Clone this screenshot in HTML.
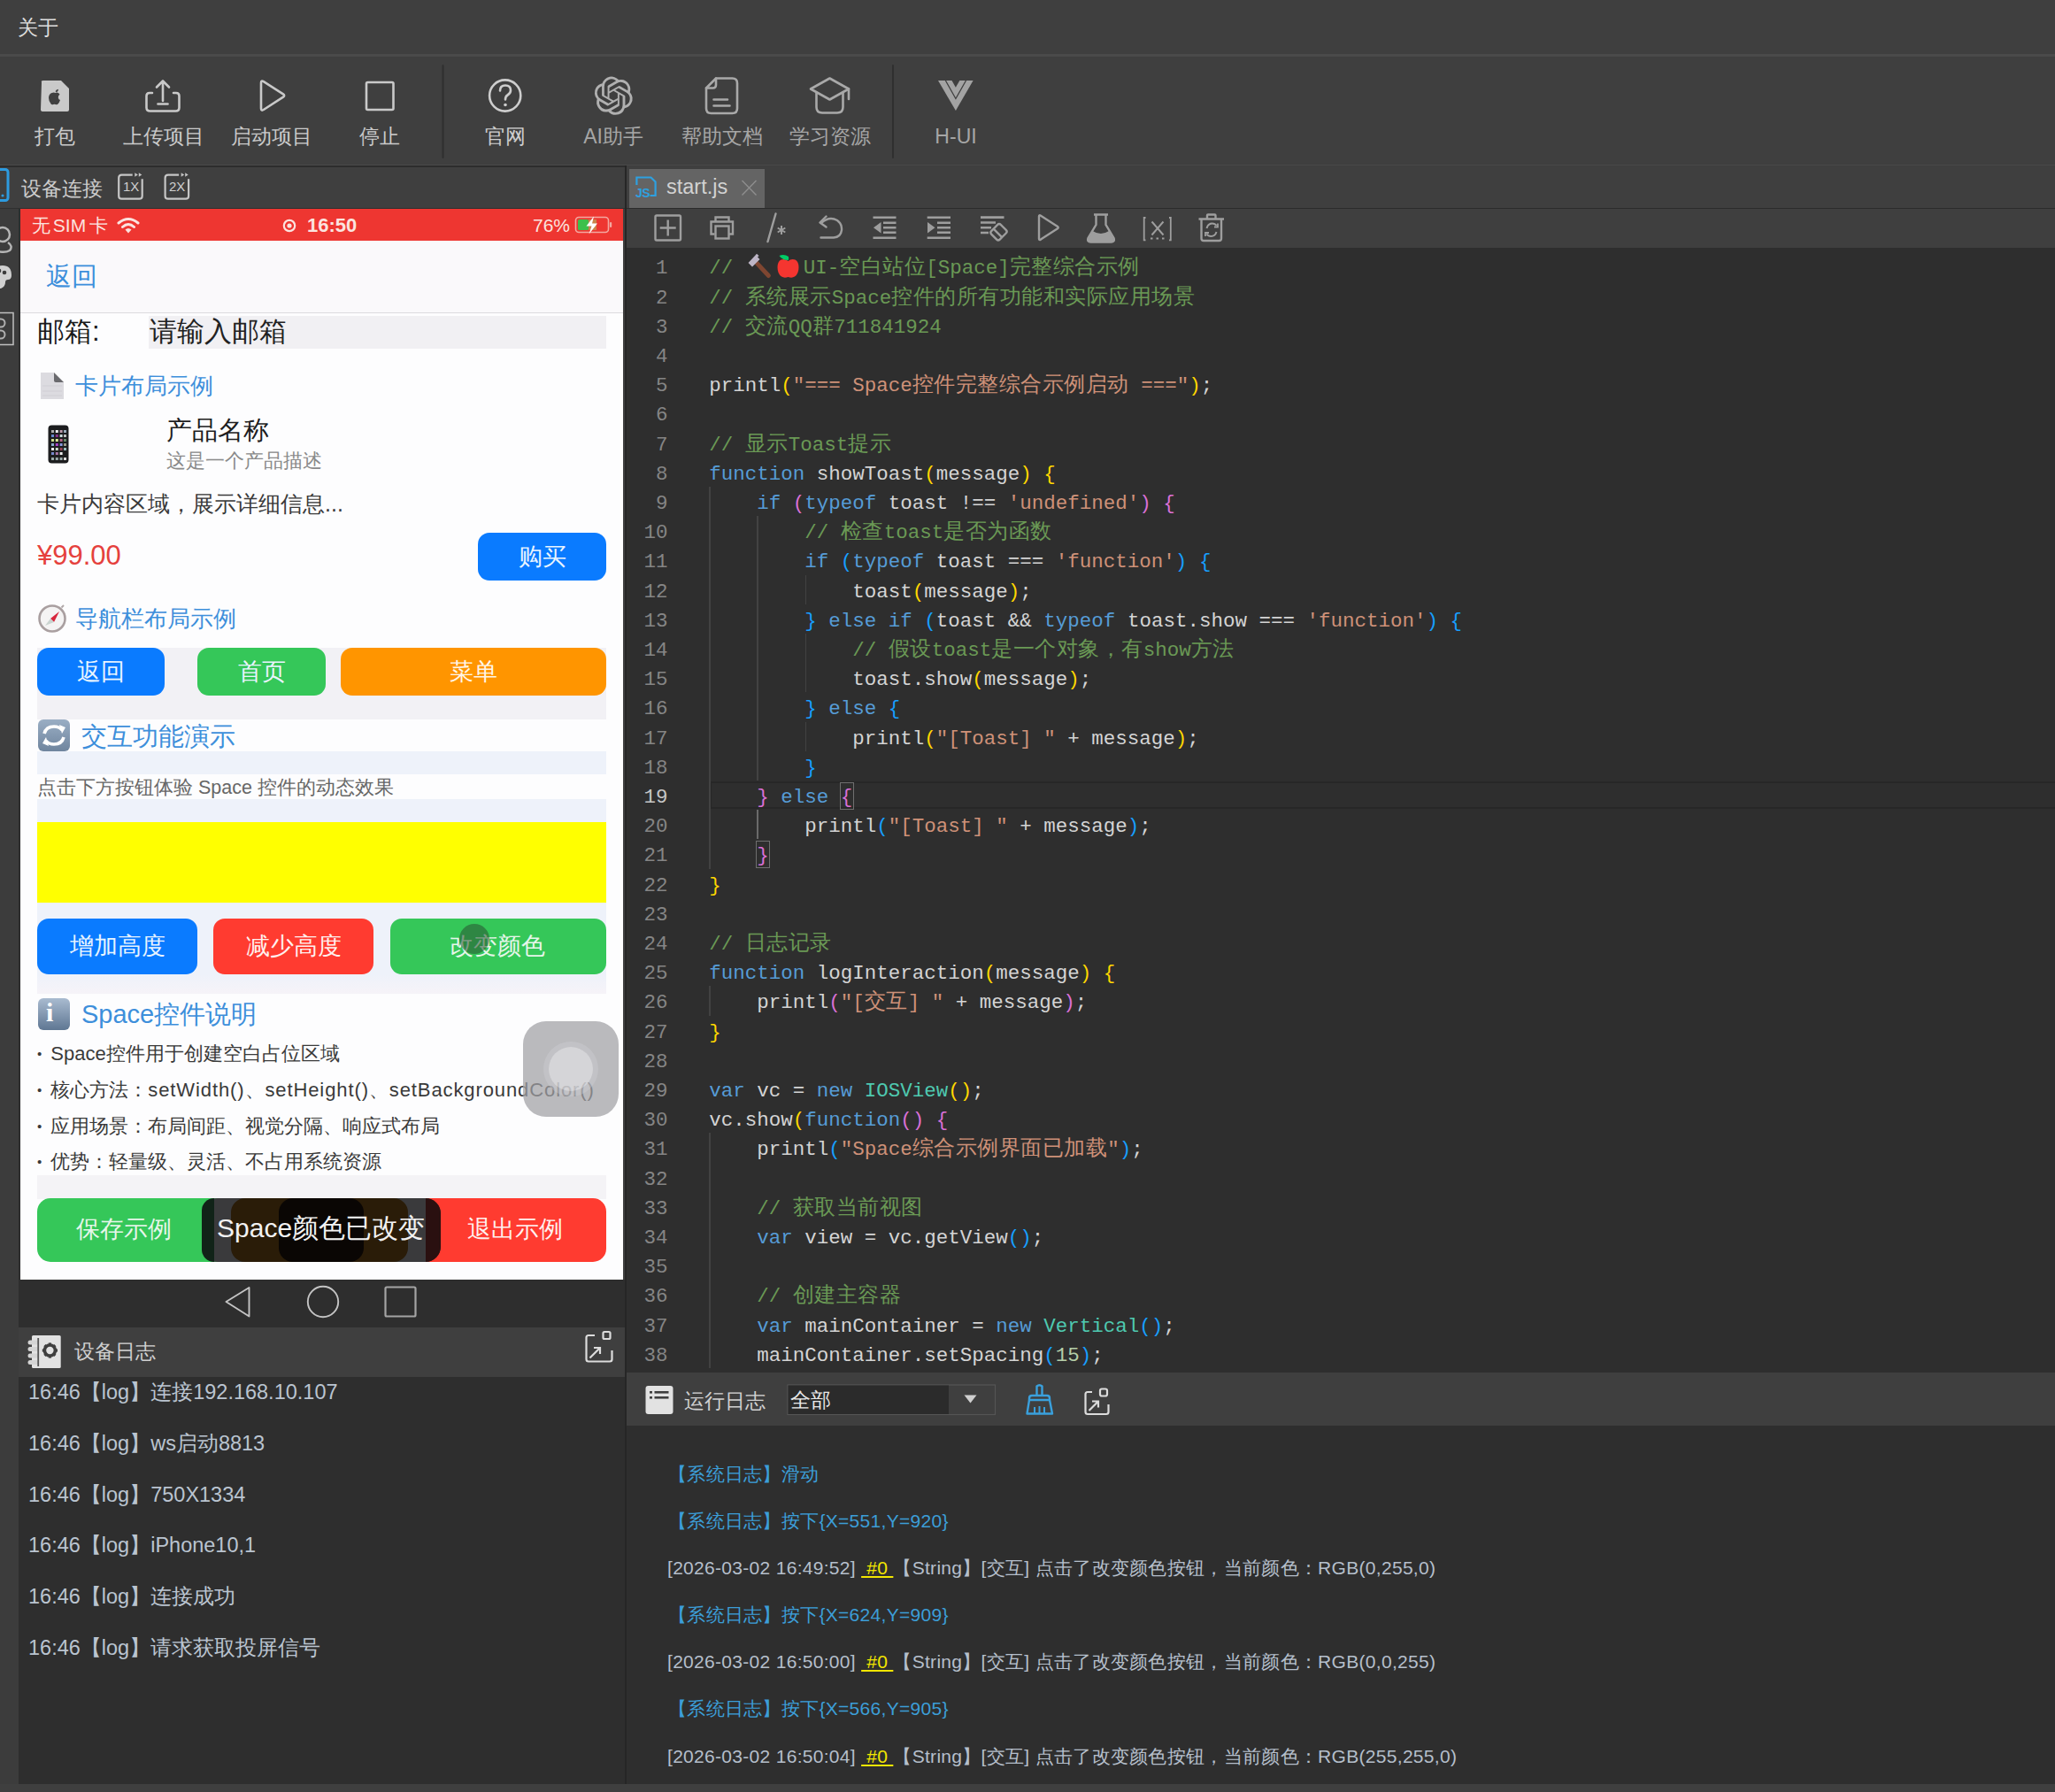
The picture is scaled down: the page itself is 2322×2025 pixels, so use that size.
<!DOCTYPE html>
<html><head><meta charset="utf-8">
<style>
*{margin:0;padding:0;box-sizing:border-box}
html,body{width:2322px;height:2025px;overflow:hidden;background:#3f3f3f;font-family:"Liberation Sans",sans-serif;}
.a{position:absolute}
.t{position:absolute;white-space:nowrap;line-height:1}
#menu{left:0;top:0;width:2322px;height:61px;background:#3f3f3f}
#tb{left:0;top:64px;width:2322px;height:122px;background:#3f3f3f}
.tbi{position:absolute;top:0;width:120px;height:122px;text-align:center;color:#cfcfcf;font-size:24px}
.tbi svg{position:absolute;left:42px;top:24px}
.tbi span{position:absolute;left:-20px;right:-20px;top:80px;text-align:center;line-height:24px}
.ln{position:absolute;left:0;width:46.5px;text-align:right;font-family:"Liberation Mono",monospace;font-size:22.5px;line-height:33.2px;height:33.2px;white-space:nowrap}
.cl{position:absolute;left:93.2px;font-family:"Liberation Mono",monospace;font-size:22.5px;line-height:33.2px;height:33.2px;white-space:pre}
.cj{font-family:"Liberation Sans",sans-serif;font-size:24px;letter-spacing:0.5px;line-height:0}
.emo{display:inline-block;position:relative;width:66px;height:0;vertical-align:top}
.rl{font-size:21px;line-height:24px;letter-spacing:0.3px}
.u{color:#f2e600;text-decoration:underline}
.code{font-family:"Liberation Mono",monospace;font-size:22.5px;}
</style></head><body>
<!-- menu -->
<div class="a" id="menu"></div>
<div class="a" style="left:0;top:61px;width:2322px;height:4px;background:#4a4a4a"></div>
<div class="t" style="left:19.5px;top:20px;font-size:23px;color:#dcdcdc">关于</div>
<!-- toolbar -->
<div class="a" id="tb"></div>
<div class="a" style="left:0;top:186px;width:2322px;height:1px;background:#494949"></div>


<!-- toolbar items -->
<svg class="a" style="left:0;top:64px" width="1120" height="122" viewBox="0 64 1120 122" fill="none" stroke-linecap="round" stroke-linejoin="round">
 <!-- pack -->
 <path d="M47 93 Q46 91 49 91 H69 L78 100 V124 Q78 126 76 126 H49 Q46 126 46 124 Z" fill="#c9c9c9"/>
 <path d="M62.5 103.2 Q63.5 101 66 100.8 Q66 103 64 104.2 Z M58.5 105 Q61 104 62.5 105 Q64 104 66 105 Q67 106 67.5 106.8 Q65.5 108 65.8 110.5 Q66.2 112.5 68 113 Q67 116 65.5 117.5 Q64.5 118.5 62.8 118 Q61.5 117.4 60.2 118 Q58.5 118.6 57.6 117.5 Q55 114.5 55 110.5 Q55.2 106 58.5 105 Z" fill="#3f3f3f"/>
 <!-- upload -->
 <g stroke="#c9c9c9" stroke-width="2.6">
  <path d="M172 105 H169 Q165.5 105 165.5 108.5 V121.5 Q165.5 125.5 169.5 125.5 H198.5 Q202.5 125.5 202.5 121.5 V108.5 Q202.5 105 199 105 H196"/>
  <path d="M184 114 V92 M177 98.5 L184 91.5 L191 98.5"/>
  <path d="M178.5 117.5 H189.5"/>
 </g>
 <!-- play -->
 <path d="M295 93.5 Q295 90.5 297.8 92.2 L320 106.3 Q322.3 108 320 109.7 L297.8 124 Q295 125.7 295 122.5 Z" stroke="#c9c9c9" stroke-width="2.6"/>
 <!-- stop -->
 <rect x="414" y="93" width="30.5" height="31" rx="1.5" stroke="#c9c9c9" stroke-width="2.6"/>
 <!-- separator -->
 <path d="M500.5 74 V178" stroke="#2f2f2f" stroke-width="2"/>
 <!-- question -->
 <g stroke="#cdcdcd" stroke-width="2.6">
  <circle cx="570.7" cy="108" r="17.6"/>
  <path d="M565 102.5 Q565 96.5 571 96.5 Q577 96.5 577 102 Q577 105.5 573.5 107.5 Q571 109 571 112.5"/>
 </g>
 <circle cx="571" cy="118.5" r="1.8" fill="#cdcdcd"/>
 <!-- openai -->
 <path transform="translate(671.6 86.6) scale(1.8)" fill="#b0b0b0" stroke="none" d="M22.2819 9.8211a5.9847 5.9847 0 0 0-.5157-4.9108 6.0462 6.0462 0 0 0-6.5098-2.9A6.0651 6.0651 0 0 0 4.9807 4.1818a5.9847 5.9847 0 0 0-3.9977 2.9 6.0462 6.0462 0 0 0 .7427 7.0966 5.98 5.98 0 0 0 .511 4.9107 6.051 6.051 0 0 0 6.5146 2.9001A5.9847 5.9847 0 0 0 13.2599 24a6.0557 6.0557 0 0 0 5.7718-4.2058 5.9894 5.9894 0 0 0 3.9977-2.9001 6.0557 6.0557 0 0 0-.7475-7.0729zm-9.022 12.6081a4.4755 4.4755 0 0 1-2.8764-1.0408l.1419-.0804 4.7783-2.7582a.7948.7948 0 0 0 .3927-.6813v-6.7369l2.02 1.1686a.071.071 0 0 1 .038.052v5.5826a4.504 4.504 0 0 1-4.4945 4.4944zm-9.6607-4.1254a4.4708 4.4708 0 0 1-.5346-3.0137l.142.0852 4.783 2.7582a.7712.7712 0 0 0 .7806 0l5.8428-3.3685v2.3324a.0804.0804 0 0 1-.0332.0615L9.74 19.9502a4.4992 4.4992 0 0 1-6.1408-1.6464zM2.3408 7.8956a4.485 4.485 0 0 1 2.3655-1.9728V11.6a.7664.7664 0 0 0 .3879.6765l5.8144 3.3543-2.0201 1.1685a.0757.0757 0 0 1-.071 0l-4.8303-2.7865A4.504 4.504 0 0 1 2.3408 7.872zm16.5963 3.8558L13.1038 8.364 15.1192 7.2a.0757.0757 0 0 1 .071 0l4.8303 2.7913a4.4944 4.4944 0 0 1-.6765 8.1042v-5.6772a.79.79 0 0 0-.407-.667zm2.0107-3.0231l-.142-.0852-4.7735-2.7818a.7759.7759 0 0 0-.7854 0L9.409 9.2297V6.8974a.0662.0662 0 0 1 .0284-.0615l4.8303-2.7866a4.4992 4.4992 0 0 1 6.6802 4.66zM8.3065 12.863l-2.02-1.1638a.0804.0804 0 0 1-.038-.0567V6.0742a4.4992 4.4992 0 0 1 7.3757-3.4537l-.142.0805L8.704 5.459a.7948.7948 0 0 0-.3927.6813zm1.0976-2.3654l2.602-1.4998 2.6069 1.4998v2.9994l-2.5974 1.4997-2.6067-1.4997Z"/>
 <!-- doc -->
 <g stroke="#a9a9a9" stroke-width="2.6">
  <path d="M809 88.5 H827.5 Q833 88.5 833 94 V122.5 Q833 128 827.5 128 H803.5 Q798 128 798 122.5 V99.5 Z"/>
  <path d="M809 88.5 V96 Q809 99.5 805.5 99.5 H798"/>
  <path d="M806.5 112.5 H822 M806.5 119.5 H824.5"/>
 </g>
 <!-- cap -->
 <g stroke="#a9a9a9" stroke-width="2.6">
  <path d="M937.5 88.5 L916 100.5 L937.5 112.5 L959 100.5 Z"/>
  <path d="M922.5 104.5 V121 Q922.5 127.5 929 127.5 H946 Q952.5 127.5 952.5 121 V104.5"/>
  <path d="M959 100.5 V112"/>
 </g>
 <path d="M1009 74 V178" stroke="#2f2f2f" stroke-width="2"/>
 <!-- vue V -->
 <path d="M1060 91 H1099.6 L1079.9 125 Z" fill="#a3a3a3"/>
 <path d="M1068.4 91 L1079.9 111.5 L1091.5 91" stroke="#3f3f3f" stroke-width="1.3" stroke-linecap="butt" stroke-linejoin="miter"/>
 <path d="M1075.2 90.5 L1079.9 98.8 L1084.6 90.5 Z" fill="#3f3f3f"/>
</svg>
<div class="t" style="left:61.5px;top:143px;font-size:23px;color:#cacaca;transform:translateX(-50%)">打包</div>
<div class="t" style="left:185px;top:143px;font-size:23px;color:#cacaca;transform:translateX(-50%)">上传项目</div>
<div class="t" style="left:307px;top:143px;font-size:23px;color:#cacaca;transform:translateX(-50%)">启动项目</div>
<div class="t" style="left:429px;top:143px;font-size:23px;color:#cacaca;transform:translateX(-50%)">停止</div>
<div class="t" style="left:571px;top:143px;font-size:23px;color:#cdcdcd;transform:translateX(-50%)">官网</div>
<div class="t" style="left:693px;top:143px;font-size:23px;color:#a6a6a6;transform:translateX(-50%)">AI助手</div>
<div class="t" style="left:816px;top:143px;font-size:23px;color:#a6a6a6;transform:translateX(-50%)">帮助文档</div>
<div class="t" style="left:938px;top:143px;font-size:23px;color:#a6a6a6;transform:translateX(-50%)">学习资源</div>
<div class="t" style="left:1080px;top:143px;font-size:23px;color:#a6a6a6;transform:translateX(-50%)">H-UI</div>


<!-- ===== LEFT PANEL ===== -->
<div class="a" style="left:0;top:187px;width:706px;height:49px;background:#3f3f3f"></div>
<div class="a" style="left:0;top:235px;width:706px;height:1px;background:#2f2f2f"></div>
<svg class="a" style="left:0;top:187px" width="240" height="49">
 <rect x="-12" y="4.5" width="21" height="35" rx="3" fill="none" stroke="#2d9be0" stroke-width="3"/>
 <circle cx="3" cy="34" r="1.6" fill="#2d9be0"/>
 <g fill="none" stroke="#c6c6c6" stroke-width="2.2">
  <path d="M149.7 10.6 H137.5 Q134.2 10.6 134.2 14 V34.4 Q134.2 37.7 137.5 37.7 H157.4 Q160.7 37.7 160.7 34.4 V15.2"/>
  <path d="M202.1 10.6 H189.9 Q186.6 10.6 186.6 14 V34.4 Q186.6 37.7 189.9 37.7 H209.8 Q213.1 37.7 213.1 34.4 V15.2"/>
 </g>
 <g fill="#c6c6c6"><path d="M152.3 8.2 L155.8 10.5 L152.3 12.8 Z M156.8 8.2 L160.3 10.5 L156.8 12.8 Z"/><path d="M204.7 8.2 L208.2 10.5 L204.7 12.8 Z M209.2 8.2 L212.7 10.5 L209.2 12.8 Z"/></g>
</svg>
<div class="t" style="left:139px;top:202.5px;font-size:15px;letter-spacing:0px;color:#cfcfcf">1X</div>
<div class="t" style="left:191px;top:202.5px;font-size:15px;letter-spacing:0px;color:#cfcfcf">2X</div>
<div class="t" style="left:24px;top:201.5px;font-size:23px;color:#cccccc">设备连接</div>
<div class="a" style="left:0;top:187px;width:706px;height:1.5px;background:#2d2d2d"></div>
<!-- left strip -->
<div class="a" style="left:0;top:236px;width:21px;height:1780px;background:#3c3c3c"></div>
<svg class="a" style="left:0;top:236px" width="22" height="170">
 <g fill="none" stroke="#b5b5b5" stroke-width="2.5">
  <circle cx="3" cy="29" r="8"/>
  <path d="M9 38 Q15 42 11 47 Q6 50 -2 48"/>
 </g>
 <path d="M-9 77 Q-9 64 3 64 Q13 64 13 75 Q13 80 9 80 Q6 80 6 83 Q6 88 1 90 Q-9 90 -9 77 Z" fill="#d0d0d0"/>
 <circle cx="5" cy="72" r="2.3" fill="#3c3c3c"/><circle cx="-1" cy="70" r="2.3" fill="#3c3c3c"/><circle cx="6" cy="81" r="0" fill="#3c3c3c"/>
 <rect x="-3" y="117.5" width="18" height="36" fill="none" stroke="#c0c0c0" stroke-width="1.5"/>
 <g fill="none" stroke="#b0b0b0" stroke-width="2"><circle cx="1" cy="129" r="4.5"/><circle cx="1" cy="142" r="4.5"/></g>
</svg>
<div class="a" style="left:21px;top:236px;width:2px;height:1210px;background:#2e2e2e"></div>
<!-- phone screen -->
<div class="a" id="phone" style="left:23px;top:236px;width:681px;height:1210px;background:#fdfdfe;overflow:hidden">
 <!-- status bar -->
 <div class="a" style="left:0;top:0;width:681px;height:36px;background:#ee3631"></div>
 <div class="t" style="left:12.5px;top:8px;font-size:21px;color:#fbe3df;word-spacing:-2.5px">无 SIM 卡</div>
 <svg class="a" style="left:108px;top:9px" width="30" height="20"><g fill="none" stroke="#fbe3df" stroke-width="3" stroke-linecap="round"><path d="M3 7 Q14 -2 25 7"/><path d="M7.5 11.5 Q14 5.5 20.5 11.5"/></g><path d="M10.5 14.5 Q14 11.5 17.5 14.5 L14 18.5 Z" fill="#fbe3df"/></svg>
 <svg class="a" style="left:295px;top:10px" width="18" height="18"><circle cx="9" cy="9" r="6.2" fill="none" stroke="#fbe3df" stroke-width="2.2"/><circle cx="9" cy="9" r="2.6" fill="#fbe3df"/></svg>
 <div class="t" style="left:324px;top:8px;font-size:22px;font-weight:bold;color:#fbe3df">16:50</div>
 <div class="t" style="left:579px;top:8px;font-size:21px;color:#fbe3df">76%</div>
 <svg class="a" style="left:626px;top:8px" width="44" height="22"><rect x="1.5" y="1.5" width="37" height="17" rx="3.5" fill="none" stroke="#f3a8a0" stroke-width="1.6"/><rect x="40" y="7" width="2.2" height="6" rx="1" fill="#f3a8a0"/><rect x="4" y="4" width="12" height="12" rx="1.5" fill="#3cc04b"/><rect x="16" y="4" width="9" height="12" fill="#c9844a"/><path d="M22 0.5 L13.5 11.5 H19.5 L16.5 20.5 L26 8.5 H20 Z" fill="#fff"/></svg>
 <!-- nav bar -->
 <div class="a" style="left:0;top:36px;width:681px;height:81px;background:#faf9fb"></div>
 <div class="a" style="left:0;top:116.5px;width:681px;height:1.5px;background:#dcdbdf"></div>
 <div class="t" style="left:29px;top:62px;font-size:29px;color:#3d8fdb">返回</div>
 <!-- email -->
 <div class="a" style="left:145px;top:121px;width:517px;height:36.5px;background:#f1f0f3"></div>
 <div class="t" style="left:19px;top:122.5px;font-size:31px;color:#1a1a1a;font-weight:500">邮箱:</div>
 <div class="t" style="left:146px;top:122.5px;font-size:31px;color:#222;font-weight:500">请输入邮箱</div>
 <!-- card section -->
 <svg class="a" style="left:22px;top:184px" width="30" height="32"><path d="M1 1 H16 L27 12 V31 H1 Z" fill="#dcdbe0"/><path d="M16 1 L27 12 H18 Q16 12 16 10 Z" fill="#6a6a6e"/><path d="M3 16 H25 M3 22 H25 M3 27 H25" stroke="#cfced4" stroke-width="1"/></svg>
 <div class="t" style="left:62px;top:187px;font-size:26px;color:#3d8fdb">卡片布局示例</div>
 <svg class="a" style="left:31px;top:244px" width="24" height="44"><rect x="0.5" y="0.5" width="23" height="43" rx="4" fill="#1c1d1f"/><g id="dots"></g>
  <g fill="#9db"><rect x="4" y="6" width="3" height="3" fill="#aaa"/><rect x="8.8" y="6" width="3" height="3" fill="#eee"/><rect x="13.6" y="6" width="3" height="3" fill="#b9a"/><rect x="18" y="6" width="3" height="3" fill="#9ab"/>
  <rect x="4" y="11" width="3" height="3" fill="#68c"/><rect x="8.8" y="11" width="3" height="3" fill="#838"/><rect x="13.6" y="11" width="3" height="3" fill="#cdd"/><rect x="18" y="11" width="3" height="3" fill="#bbb"/>
  <rect x="4" y="16" width="3" height="3" fill="#cd8"/><rect x="8.8" y="16" width="3" height="3" fill="#de9"/><rect x="13.6" y="16" width="3" height="3" fill="#b68"/><rect x="18" y="16" width="3" height="3" fill="#686"/>
  <rect x="4" y="21" width="3" height="3" fill="#8ac"/><rect x="8.8" y="21" width="3" height="3" fill="#a4c"/><rect x="13.6" y="21" width="3" height="3" fill="#89d"/><rect x="18" y="21" width="3" height="3" fill="#998"/>
  <rect x="4" y="26" width="3" height="3" fill="#eee"/><rect x="8.8" y="26" width="3" height="3" fill="#cdc"/><rect x="13.6" y="26" width="3" height="3" fill="#945"/><rect x="18" y="26" width="3" height="3" fill="#9bb"/>
  <rect x="4" y="31" width="3" height="3" fill="#78c"/><rect x="8.8" y="31" width="3" height="3" fill="#a7a"/><rect x="13.6" y="31" width="3" height="3" fill="#eee"/>
  <rect x="4" y="37" width="3" height="3" fill="#9aa"/><rect x="8.8" y="37" width="3" height="3" fill="#9aa"/><rect x="13.6" y="37" width="3" height="3" fill="#9aa"/><rect x="18" y="37" width="3" height="3" fill="#ddd"/></g></svg>
 <div class="t" style="left:165px;top:236px;font-size:29px;color:#1e1e1e">产品名称</div>
 <div class="t" style="left:165px;top:274px;font-size:22px;color:#8a8a8a">这是一个产品描述</div>
 <div class="t" style="left:19px;top:321px;font-size:25px;color:#3a3a3a">卡片内容区域，展示详细信息...</div>
 <div class="t" style="left:19px;top:376px;font-size:31px;color:#e5413d">¥99.00</div>
 <div class="a" style="left:517px;top:366px;width:145px;height:54px;border-radius:13px;background:#0a7bff"></div>
 <div class="t" style="left:589.5px;top:380px;font-size:27px;font-weight:500;color:#e8f4ff;transform:translateX(-50%)">购买</div>
 <!-- nav section -->
 <svg class="a" style="left:19px;top:446px" width="36" height="36"><circle cx="17" cy="17" r="14.5" fill="#f4f3f3" stroke="#a99fa0" stroke-width="2.6"/><path d="M27.5 4.5 L30 2" stroke="#b0a8a8" stroke-width="2"/><path d="M25 9 L15 17 L19 21 Z" fill="#d7263d"/><path d="M9 25 L15 17 L19 21 Z" fill="#c9d3cf"/></svg>
 <div class="t" style="left:62px;top:450px;font-size:26px;color:#3d8fdb">导航栏布局示例</div>
 <div class="a" style="left:19px;top:496px;width:643px;height:81px;background:#f2f1f5"></div>
 <div class="a" style="left:19px;top:496px;width:144px;height:54px;border-radius:13px;background:#0a7bff"></div>
 <div class="a" style="left:200px;top:496px;width:145px;height:54px;border-radius:13px;background:#35c759"></div>
 <div class="a" style="left:362px;top:496px;width:300px;height:54px;border-radius:13px;background:#ff9500"></div>
 <div class="t" style="left:91px;top:510px;font-size:27px;font-weight:500;color:#e8f4ff;transform:translateX(-50%)">返回</div>
 <div class="t" style="left:272.5px;top:510px;font-size:27px;font-weight:500;color:#e8f4ff;transform:translateX(-50%)">首页</div>
 <div class="t" style="left:512px;top:510px;font-size:27px;font-weight:500;color:#fff6e8;transform:translateX(-50%)">菜单</div>
 <!-- interaction section -->
 <div class="a" style="left:20px;top:577px;width:36px;height:36px;border-radius:6px;background:linear-gradient(#9aaec4,#6f859e)"></div>
 <svg class="a" style="left:20px;top:577px" width="36" height="36"><g fill="none" stroke="#fff" stroke-width="3.6"><path d="M7 16 Q9 8 18 8 Q24 8 27 12"/><path d="M29 20 Q27 28 18 28 Q12 28 9 24"/></g><path d="M24 6 L31 9 L27 16 Z M12 30 L5 27 L9 20 Z" fill="#fff"/></svg>
 <div class="t" style="left:69px;top:582px;font-size:29px;color:#3d8fdb">交互功能演示</div>
 <div class="a" style="left:19px;top:613px;width:643px;height:26px;background:#eef2fa"></div>
 <div class="a" style="left:19px;top:666.5px;width:643px;height:220px;background:linear-gradient(#eef2fa 0,#eef2fa 90%,#f6f3f8 100%)"></div>
 <div class="t" style="left:19px;top:644px;font-size:21.5px;color:#676767">点击下方按钮体验 Space 控件的动态效果</div>
  <div class="a" style="left:19px;top:693px;width:643px;height:91px;background:#ffff00"></div>
 <div class="a" style="left:19px;top:802px;width:181px;height:63px;border-radius:13px;background:#0a7bff"></div>
 <div class="a" style="left:218px;top:802px;width:181px;height:63px;border-radius:13px;background:#ff3b30"></div>
 <div class="a" style="left:418px;top:802px;width:244px;height:63px;border-radius:13px;background:#35c759"></div>
 <div class="t" style="left:109.5px;top:820px;font-size:27px;font-weight:500;color:#e8f4ff;transform:translateX(-50%)">增加高度</div>
 <div class="t" style="left:308.5px;top:820px;font-size:27px;font-weight:500;color:#fff0ee;transform:translateX(-50%)">减少高度</div>
 <div class="t" style="left:539px;top:820px;font-size:27px;font-weight:500;color:#e6f6ea;transform:translateX(-50%)">改变颜色</div>
 <div class="a" style="left:496px;top:808px;width:34px;height:34px;border-radius:50%;background:rgba(40,80,50,0.55)"></div>
  <!-- space explanation -->
 <div class="a" style="left:20px;top:892px;width:36px;height:36px;border-radius:6px;background:linear-gradient(#a9bbd0,#5f7793)"></div>
 <div class="t" style="left:29px;top:893px;font-size:30px;color:#fff;font-weight:bold;font-family:'Liberation Serif',serif">i</div>
 <div class="t" style="left:69px;top:896px;font-size:29px;color:#3d8fdb">Space控件说明</div>
 <div class="t" style="left:19px;top:944px;font-size:22px;color:#3a3a3a"><span style="font-size:15px;vertical-align:2px;margin-right:10px">•</span>Space控件用于创建空白占位区域</div>
 <div class="t" style="left:19px;top:985px;font-size:22px;color:#3a3a3a"><span style="font-size:15px;vertical-align:2px;margin-right:10px">•</span>核心方法：<span style="letter-spacing:0.9px">setWidth()、setHeight()、setBackgroundColor()</span></div>
 <div class="t" style="left:19px;top:1026px;font-size:22px;color:#3a3a3a"><span style="font-size:15px;vertical-align:2px;margin-right:10px">•</span>应用场景：布局间距、视觉分隔、响应式布局</div>
 <div class="t" style="left:19px;top:1066px;font-size:22px;color:#3a3a3a"><span style="font-size:15px;vertical-align:2px;margin-right:10px">•</span>优势：轻量级、灵活、不占用系统资源</div>
 <!-- assistive touch -->
 <div class="a" style="left:568px;top:918px;width:108px;height:108px;border-radius:26px;background:rgba(160,160,164,0.72)"></div>
 <div class="a" style="left:597px;top:947px;width:50px;height:50px;border-radius:50%;background:rgba(235,235,238,0.55);box-shadow:0 0 0 6px rgba(210,210,214,0.35)"></div>
 <!-- bottom band -->
 <div class="a" style="left:19px;top:1092px;width:643px;height:27px;background:#f4f3f6"></div>
 <div class="a" style="left:19px;top:1118px;width:220px;height:72px;border-radius:15px;background:#35c759"></div>
 <div class="a" style="left:440px;top:1118px;width:222px;height:72px;border-radius:15px;background:#ff3b30"></div>
 <div class="t" style="left:117px;top:1140px;font-size:27px;font-weight:500;color:#e6f6ea;transform:translateX(-50%)">保存示例</div>
 <div class="t" style="left:558.5px;top:1140px;font-size:27px;font-weight:500;color:#fff0ee;transform:translateX(-50%)">退出示例</div>
 <!-- toast -->
 <div class="a" style="left:205px;top:1118px;width:270px;height:72px;border-radius:18px;background:#3a3a3c"></div>
 <div class="a" style="left:238px;top:1118px;width:200px;height:72px;border-radius:16px;background:#2a1c08"></div>
 <div class="a" style="left:292px;top:1118px;width:96px;height:72px;border-radius:16px;background:#0a0604"></div>
 <div class="a" style="left:205px;top:1118px;width:14px;height:72px;border-radius:18px 0 0 18px;background:#112318"></div>
 <div class="a" style="left:458px;top:1118px;width:17px;height:72px;border-radius:0 18px 18px 0;background:#2a1010"></div>
 <div class="t" style="left:339.6px;top:1137px;font-size:30px;color:#f2f2f2;transform:translateX(-50%)">Space颜色已改变</div>
</div>
<!-- android nav -->
<div class="a" style="left:21px;top:1446px;width:685px;height:54px;background:#2e2e2e"></div>
<svg class="a" style="left:22px;top:1446px" width="684" height="53" fill="none" stroke="#c4c4c4" stroke-width="1.9" stroke-linejoin="round">
 <path d="M233.5 25 L259.5 9 V41.5 Z"/>
 <circle cx="343" cy="25" r="17.2"/>
 <rect x="413.5" y="8.5" width="34" height="33" rx="1.5" stroke="#a4a4a4" stroke-width="2.2"/>
</svg>
<!-- device log header -->
<div class="a" style="left:25px;top:1500px;width:680px;height:55.5px;background:#3f3f3f"></div>
<svg class="a" style="left:24px;top:1499px" width="681" height="56">
 <rect x="12" y="10" width="32.7" height="37" rx="1.5" fill="#e2e2e2"/>
 <g fill="#d4d4d4"><rect x="7.5" y="15.5" width="12" height="5" rx="2.5"/><rect x="7.5" y="23" width="12" height="5" rx="2.5"/><rect x="7.5" y="30.5" width="12" height="5" rx="2.5"/><rect x="7.5" y="38" width="12" height="5" rx="2.5"/></g>
 <rect x="18.3" y="13" width="1.8" height="32" fill="#555"/>
 <g transform="translate(32.4 27)" fill="#3f3f3f">
  <circle r="6" fill="none" stroke="#3f3f3f" stroke-width="3.6"/>
  <rect x="-1.6" y="-8.6" width="3.2" height="3.5"/><rect x="-1.6" y="5.1" width="3.2" height="3.5"/><rect x="-8.6" y="-1.6" width="3.5" height="3.2"/><rect x="5.1" y="-1.6" width="3.5" height="3.2"/>
  <g transform="rotate(45)"><rect x="-1.6" y="-8.4" width="3.2" height="3.3"/><rect x="-1.6" y="5.1" width="3.2" height="3.3"/><rect x="-8.4" y="-1.6" width="3.3" height="3.2"/><rect x="5.1" y="-1.6" width="3.3" height="3.2"/></g>
 </g>
 <g fill="none" stroke="#dcdcdc" stroke-width="2.2">
  <path d="M648 10 H641 Q638.5 10 638.5 12.5 V37 Q638.5 39.5 641 39.5 H665 Q667.5 39.5 667.5 37 V27"/>
  <rect x="657.5" y="6" width="8" height="8" rx="1.5"/>
  <path d="M642.5 35.5 L654 24 M647 24 H654 V31"/>
 </g>
</svg>
<div class="t" style="left:84px;top:1516px;font-size:23px;color:#cfcfcf">设备日志</div>
<!-- device log body -->
<div class="a" style="left:21px;top:1555.5px;width:685px;height:460.5px;background:#2e2e2e"></div>
<div class="a" style="left:706px;top:187px;width:2px;height:1829px;background:#262626"></div>
<div class="t" style="left:32px;top:1559px;font-size:23.5px;color:#bac4d0;line-height:28px">16:46【log】连接192.168.10.107</div>
<div class="t" style="left:32px;top:1617px;font-size:23.5px;color:#bac4d0;line-height:28px">16:46【log】ws启动8813</div>
<div class="t" style="left:32px;top:1675px;font-size:23.5px;color:#bac4d0;line-height:28px">16:46【log】750X1334</div>
<div class="t" style="left:32px;top:1732px;font-size:23.5px;color:#bac4d0;line-height:28px">16:46【log】iPhone10,1</div>
<div class="t" style="left:32px;top:1790px;font-size:23.5px;color:#bac4d0;line-height:28px">16:46【log】连接成功</div>
<div class="t" style="left:32px;top:1848px;font-size:23.5px;color:#bac4d0;line-height:28px">16:46【log】请求获取投屏信号</div>

<!-- ===== RIGHT PANEL ===== -->
<div class="a" style="left:708px;top:187px;width:1614px;height:47.5px;background:#3f3f3f"></div>
<div class="a" style="left:711px;top:191px;width:153px;height:43.5px;background:#646464"></div>
<svg class="a" style="left:711px;top:191px" width="153" height="44">
 <path d="M8.4 18 V9.5 H24.5 L29.6 14.5 V30 H23.5" fill="none" stroke="#2ea0e0" stroke-width="2.2"/>
 <path d="M127.5 13 L143.5 29.5 M143.5 13 L127.5 29.5" stroke="#8e8e8e" stroke-width="1.4"/>
</svg>
<div class="t" style="left:718px;top:211px;font-size:14px;font-weight:bold;color:#2ea0e0;letter-spacing:-0.5px">JS</div>
<div class="t" style="left:753px;top:200px;font-size:23.5px;color:#d2d2d2">start.js</div>
<div class="a" style="left:708px;top:234.5px;width:1614px;height:1.5px;background:#2b2b2b"></div>
<div class="a" style="left:708px;top:236px;width:1614px;height:44px;background:#3f3f3f"></div>
<svg class="a" style="left:708px;top:236px" width="700" height="44" fill="none" stroke="#9e9e9e" stroke-width="2.4">
 <g transform="translate(-708 -236)">
 <rect x="740.5" y="243.5" width="28.5" height="28" rx="1.5"/>
 <path d="M754.7 248.5 V266.5 M745.7 257.5 H763.7"/>
 <path d="M808.5 250.5 V245.5 H823.5 V250.5"/>
 <path d="M807.5 264.5 H803.5 V250.5 H828 V264.5 H824" />
 <rect x="808.5" y="255.5" width="15" height="14"/>
 <path d="M876.5 241.5 L867.5 273" stroke-linecap="round"/>
 <path d="M883 255 V265 M878.7 257.5 L887.3 262.5 M887.3 257.5 L878.7 262.5" stroke-width="2"/>
 <path d="M928 252 Q937 244 946 249 Q951.5 253 951 260 Q950 268 942 268.5 H927.5" stroke-linecap="round"/>
 <path d="M933.5 244.5 L926.5 251.5 L933.5 256.5" stroke-linecap="round" stroke-linejoin="round"/>
 <path d="M986.5 245.7 H1012.5 M998 251.7 H1012.5 M998 257.3 H1012.5 M998 262.8 H1012.5 M986.5 268.8 H1012.5" stroke-width="2.6"/>
 <path d="M995.5 251 L987 257.3 L995.5 263.5 Z" fill="#9e9e9e" stroke="none"/>
 <path d="M1047.7 245.7 H1074 M1059 251.7 H1074 M1059 257.3 H1074 M1059 262.8 H1074 M1047.7 268.8 H1074" stroke-width="2.6"/>
 <path d="M1048 251 L1056.5 257.3 L1048 263.5 Z" fill="#9e9e9e" stroke="none"/>
 <path d="M1108 245.6 H1134.5 M1108 251.5 H1125 M1108 257.3 H1120 M1108 263 H1117" stroke-width="2.6"/>
 <g transform="rotate(-45 1128.5 262.3)"><rect x="1121" y="255.5" width="15" height="13.5" rx="2.5"/><path d="M1127 255.5 V269"/></g>
 <path d="M1174 244.5 Q1174 242.5 1176 243.7 L1195 256 Q1196.5 257.2 1195 258.3 L1176 270.6 Q1174 271.8 1174 269.8 Z"/>
 <path d="M1236 242.5 H1252 M1238.5 242.5 V254 L1229.5 269 Q1228 273.5 1232.5 273.5 H1255.5 Q1260 273.5 1258.5 269 L1249.5 254 V242.5"/>
 <path d="M1234.5 261 Q1244 267 1253 261 L1258 269.5 Q1259.5 273.5 1255.5 273.5 H1232.5 Q1228.5 273.5 1230 269.5 Z" fill="#9e9e9e" stroke="none"/>
 <path d="M1294.5 246 H1292.7 V271.3 H1294.5 M1321 246 H1322.8 V271.3 H1321" stroke-width="1.8"/>
 <path d="M1301.5 250.5 L1314.5 265.5 M1314.5 250.5 L1301.5 265.5" stroke-width="2"/>
 <path d="M1300 269.5 H1302.5 M1306.5 269.5 H1309 M1313 269.5 H1315.5" stroke-width="2"/>
 <path d="M1354.5 247.5 H1383 M1364 247 V243.5 Q1364 242.5 1365 242.5 H1372.5 Q1373.5 242.5 1373.5 243.5 V247"/>
 <path d="M1357.5 248 V269.5 Q1357.5 272 1360 272 H1377.5 Q1380 272 1380 269.5 V248"/>
 <path d="M1363.5 258 Q1365 252.5 1369.5 252.5 Q1373 252.5 1374.5 255 M1374.5 262 Q1373 267 1368.5 267 Q1365 267 1363.5 264.5" stroke-width="2"/>
 <path d="M1376 252.5 V256.5 H1372 M1362 267 V263 H1366" stroke-width="1.8"/>
 </g>
</svg>
<div class="a" style="left:708px;top:280px;width:1614px;height:1271px;background:#2e2e2e;overflow:hidden">
<div class="a" style="left:94px;top:603.0px;width:1530px;height:31px;border:2px solid #272727;border-right:none"></div>
<div class="a" style="left:93.2px;top:270.0px;width:1.4px;height:431.6px;background:#424242"></div>
<div class="a" style="left:147.4px;top:303.2px;width:1.4px;height:298.8px;background:#424242"></div>
<div class="a" style="left:201.6px;top:369.6px;width:1.4px;height:33.2px;background:#424242"></div>
<div class="a" style="left:201.6px;top:436.0px;width:1.4px;height:66.4px;background:#424242"></div>
<div class="a" style="left:201.6px;top:535.6px;width:1.4px;height:33.2px;background:#424242"></div>
<div class="a" style="left:147.4px;top:635.2px;width:1.4px;height:33.2px;background:#6a6a6a"></div>
<div class="a" style="left:93.2px;top:834.4px;width:1.4px;height:33.2px;background:#424242"></div>
<div class="a" style="left:93.2px;top:1000.4px;width:1.4px;height:265.6px;background:#424242"></div>
<div class="a" style="left:241.3px;top:603.5px;width:15.5px;height:31.2px;border:1.5px solid #6f6f6f"></div>
<div class="a" style="left:146.4px;top:669.9px;width:15.5px;height:31.2px;border:1.5px solid #6f6f6f"></div>
<div class="ln" style="top:7.4px;color:#858585">1</div>
<div class="cl" style="top:7.4px"><span style="color:#6a9955">// </span><span class="emo"><svg width="66" height="33" style="position:absolute;left:0;top:-2px"><path d="M13.2 12.4 L26.4 26.5" stroke="#7f4631" stroke-width="5" stroke-linecap="round"/><path d="M3.5 12 L8 16.5 L16.5 8 L14 5.5 L15.5 4 L13 1.8 L11.5 3.5 Z" fill="#bdb5c6"/><path d="M48.6 10 Q45 7 40.5 8.5 Q36.5 10.5 36.5 17 Q36.5 24.5 41 27.5 Q44 29.5 48.6 28 Q53 29.5 56 27.5 Q60.5 24.5 60.5 17 Q60.5 10.5 56.5 8.5 Q52 7 48.6 10 Z" fill="#f53530"/><path d="M38.5 4 Q44 1.5 49 5 Q49.5 8 48.5 9 Q42 9 38.5 4 Z" fill="#00cc66"/></svg></span><span style="color:#6a9955">UI-</span><span class="cj" style="color:#6a9955">空白站位</span><span style="color:#6a9955">[Space]</span><span class="cj" style="color:#6a9955">完整综合示例</span></div>
<div class="ln" style="top:40.6px;color:#858585">2</div>
<div class="cl" style="top:40.6px"><span style="color:#6a9955">// </span><span class="cj" style="color:#6a9955">系统展示</span><span style="color:#6a9955">Space</span><span class="cj" style="color:#6a9955">控件的所有功能和实际应用场景</span></div>
<div class="ln" style="top:73.8px;color:#858585">3</div>
<div class="cl" style="top:73.8px"><span style="color:#6a9955">// </span><span class="cj" style="color:#6a9955">交流</span><span style="color:#6a9955">QQ</span><span class="cj" style="color:#6a9955">群</span><span style="color:#6a9955">711841924</span></div>
<div class="ln" style="top:107.0px;color:#858585">4</div>
<div class="ln" style="top:140.2px;color:#858585">5</div>
<div class="cl" style="top:140.2px"><span style="color:#d4d4d4">printl</span><span style="color:#ffd700">(</span><span style="color:#ce9178">&quot;=== </span><span style="color:#ce9178">Space</span><span class="cj" style="color:#ce9178">控件完整综合示例启动</span><span style="color:#ce9178"> ===&quot;</span><span style="color:#ffd700">)</span><span style="color:#d4d4d4">;</span></div>
<div class="ln" style="top:173.4px;color:#858585">6</div>
<div class="ln" style="top:206.6px;color:#858585">7</div>
<div class="cl" style="top:206.6px"><span style="color:#6a9955">// </span><span class="cj" style="color:#6a9955">显示</span><span style="color:#6a9955">Toast</span><span class="cj" style="color:#6a9955">提示</span></div>
<div class="ln" style="top:239.8px;color:#858585">8</div>
<div class="cl" style="top:239.8px"><span style="color:#569cd6">function</span><span style="color:#d4d4d4"> showToast</span><span style="color:#ffd700">(</span><span style="color:#d4d4d4">message</span><span style="color:#ffd700">)</span><span style="color:#d4d4d4"> </span><span style="color:#ffd700">{</span></div>
<div class="ln" style="top:273.0px;color:#858585">9</div>
<div class="cl" style="top:273.0px"><span style="color:#d4d4d4">    </span><span style="color:#569cd6">if</span><span style="color:#d4d4d4"> </span><span style="color:#da70d6">(</span><span style="color:#569cd6">typeof</span><span style="color:#d4d4d4"> toast !== </span><span style="color:#ce9178">&#x27;undefined&#x27;</span><span style="color:#da70d6">)</span><span style="color:#d4d4d4"> </span><span style="color:#da70d6">{</span></div>
<div class="ln" style="top:306.2px;color:#858585">10</div>
<div class="cl" style="top:306.2px"><span style="color:#d4d4d4">        </span><span style="color:#6a9955">// </span><span class="cj" style="color:#6a9955">检查</span><span style="color:#6a9955">toast</span><span class="cj" style="color:#6a9955">是否为函数</span></div>
<div class="ln" style="top:339.4px;color:#858585">11</div>
<div class="cl" style="top:339.4px"><span style="color:#d4d4d4">        </span><span style="color:#569cd6">if</span><span style="color:#d4d4d4"> </span><span style="color:#179fff">(</span><span style="color:#569cd6">typeof</span><span style="color:#d4d4d4"> toast === </span><span style="color:#ce9178">&#x27;function&#x27;</span><span style="color:#179fff">)</span><span style="color:#d4d4d4"> </span><span style="color:#179fff">{</span></div>
<div class="ln" style="top:372.6px;color:#858585">12</div>
<div class="cl" style="top:372.6px"><span style="color:#d4d4d4">            toast</span><span style="color:#ffd700">(</span><span style="color:#d4d4d4">message</span><span style="color:#ffd700">)</span><span style="color:#d4d4d4">;</span></div>
<div class="ln" style="top:405.8px;color:#858585">13</div>
<div class="cl" style="top:405.8px"><span style="color:#d4d4d4">        </span><span style="color:#179fff">}</span><span style="color:#d4d4d4"> </span><span style="color:#569cd6">else</span><span style="color:#d4d4d4"> </span><span style="color:#569cd6">if</span><span style="color:#d4d4d4"> </span><span style="color:#179fff">(</span><span style="color:#d4d4d4">toast &amp;&amp; </span><span style="color:#569cd6">typeof</span><span style="color:#d4d4d4"> toast.show === </span><span style="color:#ce9178">&#x27;function&#x27;</span><span style="color:#179fff">)</span><span style="color:#d4d4d4"> </span><span style="color:#179fff">{</span></div>
<div class="ln" style="top:439.0px;color:#858585">14</div>
<div class="cl" style="top:439.0px"><span style="color:#d4d4d4">            </span><span style="color:#6a9955">// </span><span class="cj" style="color:#6a9955">假设</span><span style="color:#6a9955">toast</span><span class="cj" style="color:#6a9955">是一个对象，有</span><span style="color:#6a9955">show</span><span class="cj" style="color:#6a9955">方法</span></div>
<div class="ln" style="top:472.2px;color:#858585">15</div>
<div class="cl" style="top:472.2px"><span style="color:#d4d4d4">            toast.show</span><span style="color:#ffd700">(</span><span style="color:#d4d4d4">message</span><span style="color:#ffd700">)</span><span style="color:#d4d4d4">;</span></div>
<div class="ln" style="top:505.4px;color:#858585">16</div>
<div class="cl" style="top:505.4px"><span style="color:#d4d4d4">        </span><span style="color:#179fff">}</span><span style="color:#d4d4d4"> </span><span style="color:#569cd6">else</span><span style="color:#d4d4d4"> </span><span style="color:#179fff">{</span></div>
<div class="ln" style="top:538.6px;color:#858585">17</div>
<div class="cl" style="top:538.6px"><span style="color:#d4d4d4">            printl</span><span style="color:#ffd700">(</span><span style="color:#ce9178">&quot;[Toast] &quot;</span><span style="color:#d4d4d4"> + message</span><span style="color:#ffd700">)</span><span style="color:#d4d4d4">;</span></div>
<div class="ln" style="top:571.8px;color:#858585">18</div>
<div class="cl" style="top:571.8px"><span style="color:#d4d4d4">        </span><span style="color:#179fff">}</span></div>
<div class="ln" style="top:605.0px;color:#c6c6c6">19</div>
<div class="cl" style="top:605.0px"><span style="color:#d4d4d4">    </span><span style="color:#da70d6">}</span><span style="color:#d4d4d4"> </span><span style="color:#569cd6">else</span><span style="color:#d4d4d4"> </span><span style="color:#da70d6">{</span></div>
<div class="ln" style="top:638.2px;color:#858585">20</div>
<div class="cl" style="top:638.2px"><span style="color:#d4d4d4">        printl</span><span style="color:#179fff">(</span><span style="color:#ce9178">&quot;[Toast] &quot;</span><span style="color:#d4d4d4"> + message</span><span style="color:#179fff">)</span><span style="color:#d4d4d4">;</span></div>
<div class="ln" style="top:671.4px;color:#858585">21</div>
<div class="cl" style="top:671.4px"><span style="color:#d4d4d4">    </span><span style="color:#da70d6">}</span></div>
<div class="ln" style="top:704.6px;color:#858585">22</div>
<div class="cl" style="top:704.6px"><span style="color:#ffd700">}</span></div>
<div class="ln" style="top:737.8px;color:#858585">23</div>
<div class="ln" style="top:771.0px;color:#858585">24</div>
<div class="cl" style="top:771.0px"><span style="color:#6a9955">// </span><span class="cj" style="color:#6a9955">日志记录</span></div>
<div class="ln" style="top:804.2px;color:#858585">25</div>
<div class="cl" style="top:804.2px"><span style="color:#569cd6">function</span><span style="color:#d4d4d4"> logInteraction</span><span style="color:#ffd700">(</span><span style="color:#d4d4d4">message</span><span style="color:#ffd700">)</span><span style="color:#d4d4d4"> </span><span style="color:#ffd700">{</span></div>
<div class="ln" style="top:837.4px;color:#858585">26</div>
<div class="cl" style="top:837.4px"><span style="color:#d4d4d4">    printl</span><span style="color:#da70d6">(</span><span style="color:#ce9178">&quot;[</span><span class="cj" style="color:#ce9178">交互</span><span style="color:#ce9178">]</span><span style="color:#ce9178"> &quot;</span><span style="color:#d4d4d4"> + message</span><span style="color:#da70d6">)</span><span style="color:#d4d4d4">;</span></div>
<div class="ln" style="top:870.6px;color:#858585">27</div>
<div class="cl" style="top:870.6px"><span style="color:#ffd700">}</span></div>
<div class="ln" style="top:903.8px;color:#858585">28</div>
<div class="ln" style="top:937.0px;color:#858585">29</div>
<div class="cl" style="top:937.0px"><span style="color:#569cd6">var</span><span style="color:#d4d4d4"> vc = </span><span style="color:#569cd6">new</span><span style="color:#d4d4d4"> </span><span style="color:#4ec9b0">IOSView</span><span style="color:#ffd700">(</span><span style="color:#ffd700">)</span><span style="color:#d4d4d4">;</span></div>
<div class="ln" style="top:970.2px;color:#858585">30</div>
<div class="cl" style="top:970.2px"><span style="color:#d4d4d4">vc.show</span><span style="color:#ffd700">(</span><span style="color:#569cd6">function</span><span style="color:#da70d6">(</span><span style="color:#da70d6">)</span><span style="color:#d4d4d4"> </span><span style="color:#da70d6">{</span></div>
<div class="ln" style="top:1003.4px;color:#858585">31</div>
<div class="cl" style="top:1003.4px"><span style="color:#d4d4d4">    printl</span><span style="color:#179fff">(</span><span style="color:#ce9178">&quot;</span><span style="color:#ce9178">Space</span><span class="cj" style="color:#ce9178">综合示例界面已加载</span><span style="color:#ce9178">&quot;</span><span style="color:#179fff">)</span><span style="color:#d4d4d4">;</span></div>
<div class="ln" style="top:1036.6px;color:#858585">32</div>
<div class="ln" style="top:1069.8px;color:#858585">33</div>
<div class="cl" style="top:1069.8px"><span style="color:#d4d4d4">    </span><span style="color:#6a9955">// </span><span class="cj" style="color:#6a9955">获取当前视图</span></div>
<div class="ln" style="top:1103.0px;color:#858585">34</div>
<div class="cl" style="top:1103.0px"><span style="color:#d4d4d4">    </span><span style="color:#569cd6">var</span><span style="color:#d4d4d4"> view = vc.getView</span><span style="color:#179fff">(</span><span style="color:#179fff">)</span><span style="color:#d4d4d4">;</span></div>
<div class="ln" style="top:1136.2px;color:#858585">35</div>
<div class="ln" style="top:1169.4px;color:#858585">36</div>
<div class="cl" style="top:1169.4px"><span style="color:#d4d4d4">    </span><span style="color:#6a9955">// </span><span class="cj" style="color:#6a9955">创建主容器</span></div>
<div class="ln" style="top:1202.6px;color:#858585">37</div>
<div class="cl" style="top:1202.6px"><span style="color:#d4d4d4">    </span><span style="color:#569cd6">var</span><span style="color:#d4d4d4"> mainContainer = </span><span style="color:#569cd6">new</span><span style="color:#d4d4d4"> </span><span style="color:#4ec9b0">Vertical</span><span style="color:#179fff">(</span><span style="color:#179fff">)</span><span style="color:#d4d4d4">;</span></div>
<div class="ln" style="top:1235.8px;color:#858585">38</div>
<div class="cl" style="top:1235.8px"><span style="color:#d4d4d4">    mainContainer.setSpacing</span><span style="color:#179fff">(</span><span style="color:#b5cea8">15</span><span style="color:#179fff">)</span><span style="color:#d4d4d4">;</span></div>
</div>
<!-- run log -->
<div class="a" style="left:708px;top:1552px;width:1614px;height:59px;background:#3f3f3f"></div>
<svg class="a" style="left:708px;top:1551px" width="600" height="60">
 <g transform="translate(-708 -1551)">
 <rect x="729.5" y="1566" width="31" height="32" rx="3" fill="#e2e2e2"/>
 <g fill="#3f3f3f"><rect x="734" y="1572" width="3" height="2.6"/><rect x="739.5" y="1572" width="16" height="2.6"/><rect x="734" y="1578" width="3" height="2.6"/><rect x="739.5" y="1578" width="16" height="2.6"/></g>
 <rect x="890" y="1565" width="234.5" height="33.5" fill="#3f3f3f" stroke="#555" stroke-width="1.2"/>
 <rect x="890.5" y="1565.5" width="181.5" height="32.5" fill="#2b2b2b"/>
 <path d="M1089.5 1576.5 H1103.5 L1096.5 1585.5 Z" fill="#cfcfcf"/>
 <g fill="none" stroke="#3aa0dc" stroke-width="2.4" stroke-linejoin="round">
  <path d="M1171.5 1577 V1566.5 Q1174.5 1564 1177.5 1566.5 V1577"/>
  <path d="M1163 1580 Q1163 1577 1166 1577 H1183 Q1186 1577 1186 1580 V1582 H1163 Z"/>
  <path d="M1163 1582 L1160.5 1597.5 H1189 L1186 1582"/>
  <path d="M1169 1597 V1590 M1174.5 1597 V1589 M1180 1597 V1590" stroke-width="2"/>
 </g>
 <g fill="none" stroke="#dcdcdc" stroke-width="2.2">
  <path d="M1234 1573 H1229 Q1226.5 1573 1226.5 1575.5 V1595.5 Q1226.5 1598 1229 1598 H1250 Q1252.5 1598 1252.5 1595.5 V1587"/>
  <rect x="1243" y="1569.5" width="8" height="8" rx="2"/>
  <path d="M1230.5 1594 L1241 1583.5 M1234 1583.5 H1241 V1590.5"/>
 </g>
 </g>
</svg>
<div class="t" style="left:773px;top:1572px;font-size:23px;color:#d0d0d0">运行日志</div>
<div class="t" style="left:893px;top:1571px;font-size:23px;color:#e8e8e8">全部</div>
<div class="a" style="left:708px;top:1611px;width:1614px;height:405px;background:#2e2e2e"></div>
<div class="t rl" style="left:755px;top:1654px;color:#3c9ed8">【系统日志】滑动</div>
<div class="t rl" style="left:755px;top:1707px;color:#3c9ed8">【系统日志】按下{X=551,Y=920}</div>
<div class="t rl" style="left:754px;top:1760px;color:#b5bfcb">[2026-03-02 16:49:52] <span class="u">&nbsp;#0&nbsp;</span>【String】[交互] 点击了改变颜色按钮，当前颜色：RGB(0,255,0)</div>
<div class="t rl" style="left:755px;top:1813px;color:#3c9ed8">【系统日志】按下{X=624,Y=909}</div>
<div class="t rl" style="left:754px;top:1866px;color:#b5bfcb">[2026-03-02 16:50:00] <span class="u">&nbsp;#0&nbsp;</span>【String】[交互] 点击了改变颜色按钮，当前颜色：RGB(0,0,255)</div>
<div class="t rl" style="left:755px;top:1919px;color:#3c9ed8">【系统日志】按下{X=566,Y=905}</div>
<div class="t rl" style="left:754px;top:1973px;color:#b5bfcb">[2026-03-02 16:50:04] <span class="u">&nbsp;#0&nbsp;</span>【String】[交互] 点击了改变颜色按钮，当前颜色：RGB(255,255,0)</div>

<div class="a" style="left:0;top:2016px;width:2322px;height:9px;background:#3f3f3f"></div>
</body></html>
